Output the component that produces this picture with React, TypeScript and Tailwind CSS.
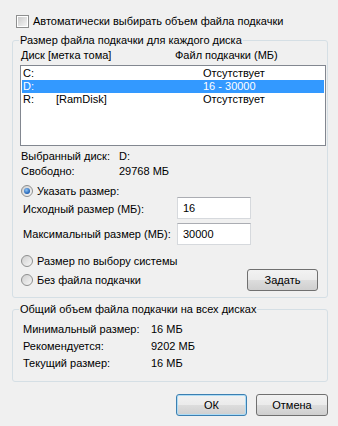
import React from 'react';

const btn =
  'h-[22px] rounded-[3px] border bg-[linear-gradient(#f2f2f2_0%,#ebebeb_50%,#dddddd_50%,#cfcfcf_100%)] text-black leading-none';

function Radio({ checked }: { checked?: boolean }) {
  return (
    <span className="flex h-[12px] w-[12px] shrink-0 items-center justify-center rounded-full border border-[#8e8f8f] bg-[linear-gradient(135deg,#cfcfcf,#f7f7f7)]">
      {checked && (
        <span className="h-[6px] w-[6px] rounded-full bg-[radial-gradient(circle_at_40%_35%,#8dc4f5,#1f5fb3_70%)]" />
      )}
    </span>
  );
}

function Row({ drive, label, size, selected }: { drive: string; label?: string; size: string; selected?: boolean }) {
  return (
    <div className={`mx-[1px] flex h-[13px] items-center leading-[13px] ${selected ? 'bg-[#3399ff] text-white' : ''}`}>
      <span className="w-[34px] shrink-0 pl-[1px]">{drive}</span>
      <span className="w-[147px] shrink-0">{label}</span>
      <span className="whitespace-nowrap">{size}</span>
    </div>
  );
}

export default function App() {
  return (
    <div className="h-[426px] w-[338px] bg-[#f0f0f0] pl-[12px] pr-[10px] pt-[15px] font-['Liberation_Sans',Arial,sans-serif] text-[11px] leading-[15px] text-black">
      <label className="ml-[4px] flex h-[13px] items-center gap-[4px]">
        <span className="flex h-[13px] w-[13px] items-center justify-center border border-[#8e8f8f] bg-white">
          <span className="h-[9px] w-[9px] bg-[linear-gradient(135deg,#cbcbcb,#f4f4f4)]" />
        </span>
        <span className="whitespace-nowrap">Автоматически выбирать объем файла подкачки</span>
      </label>

      <fieldset className="mt-[5px] h-[265px] rounded-[3px] border border-[#d5dfe5] pl-[7px] pr-[1px]">
        <legend className="ml-[-1px] whitespace-nowrap px-[1px]">Размер файла подкачки для каждого диска</legend>
        <div className="flex whitespace-nowrap">
          <span className="w-[155px] shrink-0 pl-[1px]">Диск [метка тома]</span>
          <span>Файл подкачки (МБ)</span>
        </div>
        <div className="mt-[2px] h-[81px] w-[306px] border border-[#828790] bg-white pt-[1px]">
          <Row drive="C:" size="Отсутствует" />
          <Row drive="D:" size="16 - 30000" selected />
          <Row drive="R:" label="[RamDisk]" size="Отсутствует" />
        </div>

        <div className="mt-[3px] flex whitespace-nowrap pl-[1px]">
          <span className="w-[98px] shrink-0">Выбранный диск:</span>
          <span>D:</span>
        </div>
        <div className="flex whitespace-nowrap pl-[1px]">
          <span className="w-[98px] shrink-0">Свободно:</span>
          <span>29768 МБ</span>
        </div>

        <label className="ml-[1px] mt-[6px] flex h-[12px] items-center gap-[4px] whitespace-nowrap">
          <Radio checked />
          <span>Указать размер:</span>
        </label>
        <div className="flex h-[22px] items-center whitespace-nowrap">
          <span className="w-[157px] shrink-0 pl-[3px] pt-[3px]">Исходный размер (МБ):</span>
          <div className="flex h-[22px] w-[74px] items-center border border-[#d6d9dd] border-t-[#abadb3] bg-white pl-[5px]">16</div>
        </div>
        <div className="mt-[4px] flex h-[22px] items-center whitespace-nowrap">
          <span className="w-[157px] shrink-0 pl-[3px]">Максимальный размер (МБ):</span>
          <div className="flex h-[22px] w-[74px] items-center border border-[#d6d9dd] border-t-[#abadb3] bg-white pl-[5px]">30000</div>
        </div>

        <label className="ml-[1px] mt-[10px] flex h-[12px] items-center gap-[4px] whitespace-nowrap">
          <Radio />
          <span>Размер по выбору системы</span>
        </label>
        <div className="mt-[2px] flex h-[22px] items-center justify-between whitespace-nowrap pr-[8px]">
          <label className="ml-[1px] flex items-center gap-[4px]">
            <Radio />
            <span>Без файла подкачки</span>
          </label>
          <button className={`${btn} w-[71px] border-[#707070]`}>Задать</button>
        </div>
      </fieldset>

      <fieldset className="mt-[4px] h-[80px] rounded-[3px] border border-[#d5dfe5] pl-[7px]">
        <legend className="ml-[-1px] whitespace-nowrap px-[1px]">Общий объем файла подкачки на всех дисках</legend>
        <div className="mt-[4px] whitespace-nowrap pl-[3px] leading-[17px]">
          <div className="flex">
            <span className="w-[128px] shrink-0">Минимальный размер:</span>
            <span>16 МБ</span>
          </div>
          <div className="flex">
            <span className="w-[128px] shrink-0">Рекомендуется:</span>
            <span>9202 МБ</span>
          </div>
          <div className="flex">
            <span className="w-[128px] shrink-0">Текущий размер:</span>
            <span>16 МБ</span>
          </div>
        </div>
      </fieldset>

      <div className="mt-[12px] flex justify-end gap-[9px]">
        <button className={`${btn} w-[71px] border-[#3c7fb1] shadow-[inset_0_0_0_1px_#aedcf5]`}>ОК</button>
        <button className={`${btn} w-[72px] border-[#707070]`}>Отмена</button>
      </div>
    </div>
  );
}
